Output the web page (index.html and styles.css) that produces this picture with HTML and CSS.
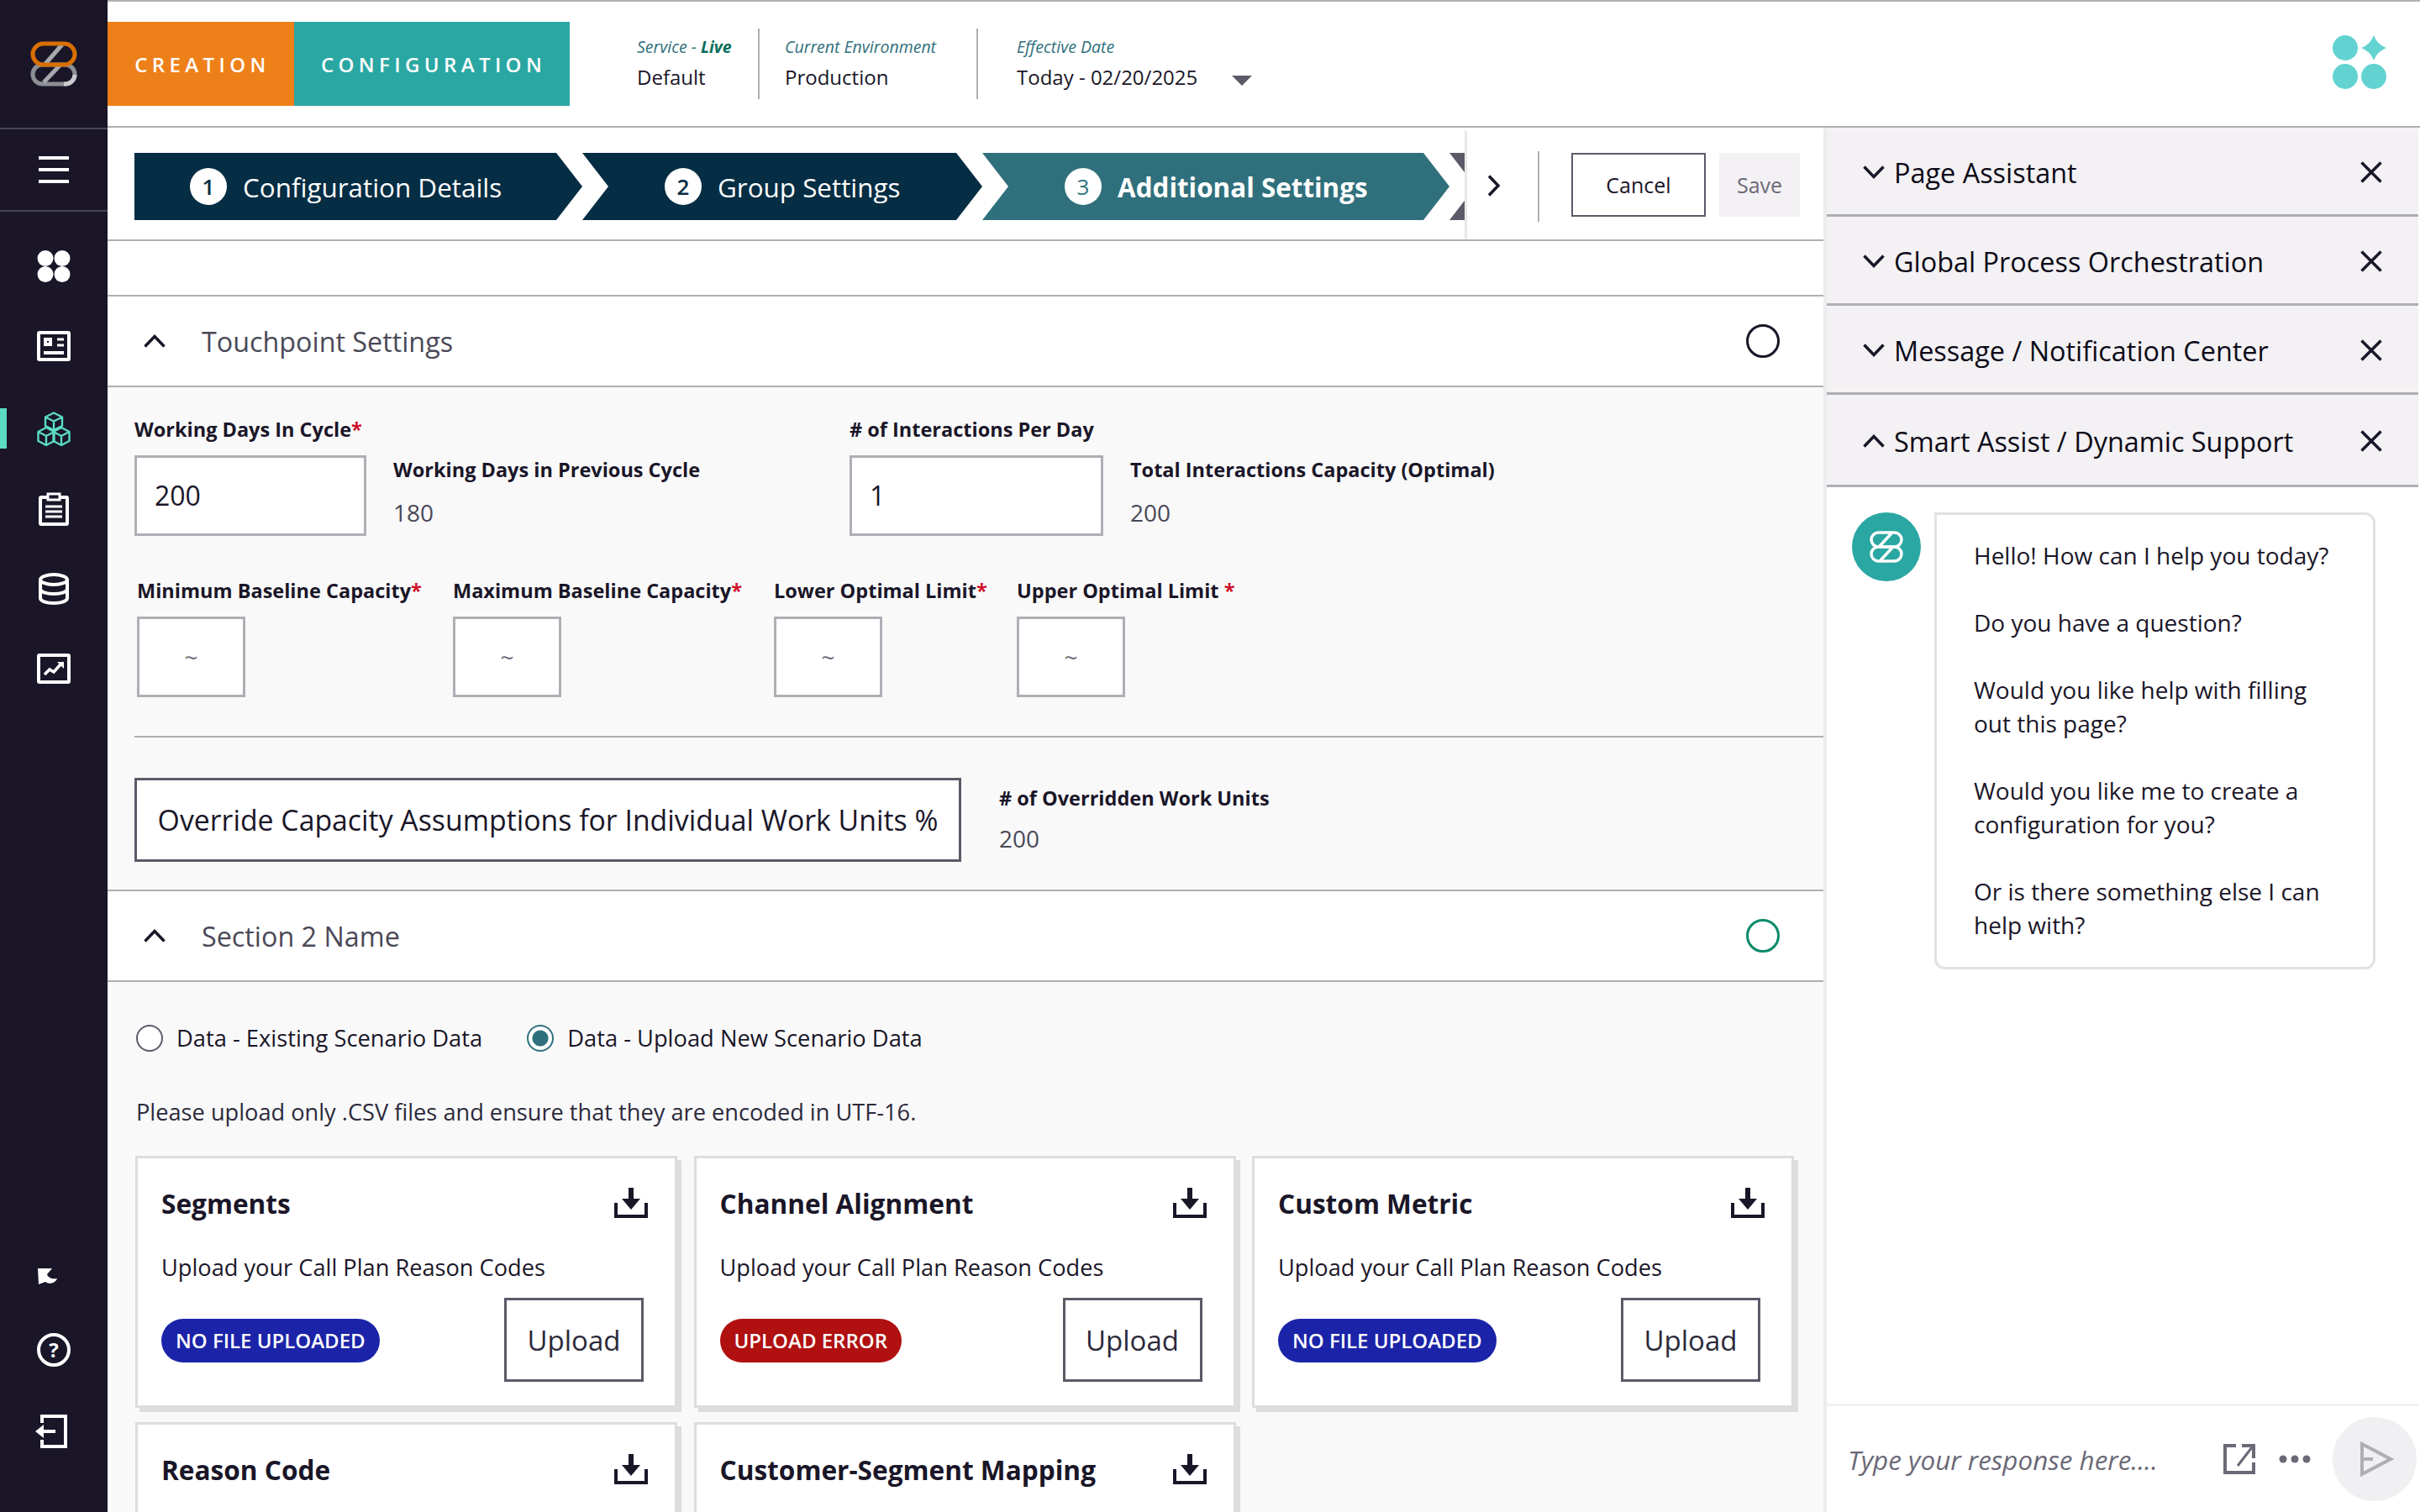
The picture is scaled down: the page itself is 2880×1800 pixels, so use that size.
FILE: index.html
```html
<!DOCTYPE html>
<html lang="en">
<head>
  <meta charset="UTF-8" />
  <title>Configuration - Additional Settings</title>
  <link rel="stylesheet" href="styles.css">
</head>
<body>
  <div class="app">

    <!-- left rail -->
    <aside class="rail">
      <div class="rail-logo">
        <svg width="56" height="54" viewBox="0 0 56 54" fill="none">
          <rect x="3" y="28" width="50" height="23" rx="11.5" stroke="#8b8e94" stroke-width="5"/>
          <path d="M16 49 L36 28" stroke="#a5a8ad" stroke-width="5"/>
          <path d="M40 51 H42 A11 11 0 0 0 53 40" stroke="#c9cbce" stroke-width="5"/>
          <path d="M18 27 L38 4" stroke="#a5a8ad" stroke-width="5"/>
          <rect x="3" y="3" width="50" height="25" rx="12.5" stroke="#d96f00" stroke-width="5"/>
        </svg>
      </div>
      <div class="rail-menu">
        <span></span><span></span><span></span>
      </div>
      <nav class="rail-nav">
        <a class="rail-item">
          <svg width="40" height="38" viewBox="0 0 40 38" fill="#fff"><circle cx="10" cy="9.5" r="9.5"/><circle cx="30" cy="9.5" r="9.5"/><circle cx="10" cy="28.5" r="9.5"/><circle cx="30" cy="28.5" r="9.5"/></svg>
        </a>
        <a class="rail-item">
          <svg width="40" height="36" viewBox="0 0 40 36" fill="none" stroke="#fff" stroke-width="4"><rect x="2" y="2" width="36" height="32" rx="1"/><rect x="10" y="10" width="6" height="6" stroke-width="4"/><path d="M24 10 H32 M24 17 H32" stroke-width="3"/><path d="M8 26 H32" stroke-width="4"/></svg>
        </a>
        <a class="rail-item active">
          <svg width="40" height="42" viewBox="0 0 40 42" fill="none" stroke="#5bdcc4" stroke-width="2.4" stroke-linejoin="round"><path d="M20 1.5 L30 6.5 V17 L20 22 L10 17 V6.5 Z M10 6.5 L20 11.5 L30 6.5 M20 11.5 V22"/><path d="M11 19 L20.5 24 V35 L11 40 L1.5 35 V24 Z M1.5 24 L11 29 L20.5 24 M11 29 V40"/><path d="M29 19 L38.5 24 V35 L29 40 L19.5 35 V24 Z M19.5 24 L29 29 L38.5 24 M29 29 V40"/></svg>
        </a>
        <a class="rail-item">
          <svg width="36" height="40" viewBox="0 0 36 40" fill="none" stroke="#fff" stroke-width="4"><rect x="2" y="6" width="32" height="32" rx="1"/><rect x="11" y="2" width="14" height="7" fill="#1a1628" stroke-width="3"/><path d="M8 17 H28 M8 23 H28 M8 29 H28" stroke-width="3"/></svg>
        </a>
        <a class="rail-item">
          <svg width="36" height="38" viewBox="0 0 36 38" fill="none" stroke="#fff" stroke-width="4"><ellipse cx="18" cy="8" rx="16" ry="6"/><path d="M2 8 V30 C2 33.5 9 36 18 36 C27 36 34 33.5 34 30 V8"/><path d="M2 19 C2 22.5 9 25 18 25 C27 25 34 22.5 34 19"/></svg>
        </a>
        <a class="rail-item">
          <svg width="40" height="36" viewBox="0 0 40 36" fill="none" stroke="#fff" stroke-width="4"><rect x="2" y="2" width="36" height="32" rx="1"/><path d="M9 25 L15 19 L20 22 L28 13" stroke-width="3.5"/><path d="M24 10 H32 V18 Z" fill="#fff" stroke="none"/></svg>
        </a>
      </nav>
      <div class="rail-bottom">
        <a class="rail-foot foot-back">
          <svg width="24" height="19" viewBox="0 0 24 19" fill="#fff"><path d="M0 0 H17 L11 7 C12 11 17 13 23 12 C21 17 15 20 9 16 L1 19 Z"/></svg>
        </a>
        <a class="rail-foot help">?</a>
        <a class="rail-foot foot-exit">
          <svg width="38" height="40" viewBox="0 0 38 40" fill="none" stroke="#fff" stroke-width="4"><path d="M8 10 V2 H36 V38 H8 V30"/><path d="M9 20 H24" stroke-width="4"/><path d="M0 20 L10 12 V28 Z" fill="#fff" stroke="none"/></svg>
        </a>
      </div>
    </aside>

    <div class="main">

      <!-- top bar -->
      <header class="topbar">
        <div class="tabs">
          <div class="tab tab-creation">CREATION</div>
          <div class="tab tab-config">CONFIGURATION</div>
        </div>
        <div class="meta meta-service">
          <div class="meta-label">Service - <b>Live</b></div>
          <div class="meta-value">Default</div>
        </div>
        <div class="meta meta-env">
          <div class="meta-label">Current Environment</div>
          <div class="meta-value">Production</div>
        </div>
        <div class="meta meta-date">
          <div class="meta-label">Effective Date</div>
          <div class="meta-value">Today - 02/20/2025</div>
        </div>
        <div class="date-caret"></div>
        <svg class="top-logo" width="64" height="64" viewBox="0 0 64 64" fill="#62d3d1"><circle cx="15" cy="15" r="15"/><circle cx="15" cy="49" r="15"/><circle cx="49" cy="49" r="15"/><path d="M49 0 Q53 11 64 15 Q53 19 49 30 Q45 19 34 15 Q45 11 49 0 Z"/></svg>
      </header>

      <div class="workspace">
        <main class="content">

          <!-- stepper -->
          <div class="stepbar">
            <div class="steps">
              <div class="step step-first"><span class="step-num">1</span>Configuration Details</div>
              <div class="step step-second"><span class="step-num">2</span>Group Settings</div>
              <div class="step step-current"><span class="step-num">3</span>Additional Settings</div>
              <div class="step step-next"></div>
            </div>
            <div class="step-more">
              <svg width="16" height="26" viewBox="0 0 16 26" fill="none" stroke="#1a1628" stroke-width="3.5"><path d="M2 1.5 L13 13 L2 24.5"/></svg>
            </div>
            <div class="step-rule"></div>
            <button class="btn-cancel">Cancel</button>
            <button class="btn-save">Save</button>
          </div>

          <div class="spacer"></div>

          <!-- touchpoint settings -->
          <section class="section-head">
            <svg class="caret" width="26" height="16" viewBox="0 0 26 16" fill="none" stroke="#1a1628" stroke-width="3.5"><path d="M1.5 14.5 L13 2.5 L24.5 14.5"/></svg>
            <h2>Touchpoint Settings</h2>
            <span class="status-dot"></span>
          </section>
          <div class="touch-body">
            <div class="row-top">
              <div class="group group-days">
                <div class="label">Working Days In Cycle<i>*</i></div>
                <div class="group-line">
                  <div class="input input-days">200</div>
                  <div class="stat">
                    <div class="label">Working Days in Previous Cycle</div>
                    <div class="stat-value">180</div>
                  </div>
                </div>
              </div>
              <div class="group">
                <div class="label"># of Interactions Per Day</div>
                <div class="group-line">
                  <div class="input input-inter">1</div>
                  <div class="stat">
                    <div class="label">Total Interactions Capacity (Optimal)</div>
                    <div class="stat-value">200</div>
                  </div>
                </div>
              </div>
            </div>
            <div class="row-limits">
              <div class="limit">
                <div class="label">Minimum Baseline Capacity<i>*</i></div>
                <div class="limit-box">~</div>
              </div>
              <div class="limit">
                <div class="label">Maximum Baseline Capacity<i>*</i></div>
                <div class="limit-box">~</div>
              </div>
              <div class="limit">
                <div class="label">Lower Optimal Limit<i>*</i></div>
                <div class="limit-box">~</div>
              </div>
              <div class="limit">
                <div class="label">Upper Optimal Limit <i>*</i></div>
                <div class="limit-box">~</div>
              </div>
            </div>
            <div class="rule"></div>
            <div class="row-override">
              <button class="btn-override">Override Capacity Assumptions for Individual Work Units %</button>
              <div class="stat">
                <div class="label"># of Overridden Work Units</div>
                <div class="stat-value">200</div>
              </div>
            </div>
          </div>

          <!-- section 2 -->
          <section class="section-head">
            <svg class="caret" width="26" height="16" viewBox="0 0 26 16" fill="none" stroke="#1a1628" stroke-width="3.5"><path d="M1.5 14.5 L13 2.5 L24.5 14.5"/></svg>
            <h2>Section 2 Name</h2>
            <span class="status-dot done"></span>
          </section>
          <div class="upload-body">
            <div class="radios">
              <label class="radio"><span class="radio-mark"></span>Data - Existing Scenario Data</label>
              <label class="radio on"><span class="radio-mark"></span>Data - Upload New Scenario Data</label>
            </div>
            <p class="note">Please upload only .CSV files and ensure that they are encoded in UTF-16.</p>
            <div class="cards">
              <div class="card">
                <div class="card-head"><h3>Segments</h3>
                  <svg width="40" height="36" viewBox="0 0 40 36"><path d="M17 0 H23 V13 H31 L20 26 L9 13 H17 Z" fill="#1a1628"/><path d="M2 18 V34 H38 V18" fill="none" stroke="#1a1628" stroke-width="4"/></svg>
                </div>
                <p class="card-desc">Upload your Call Plan Reason Codes</p>
                <div class="card-foot"><span class="pill pill-none">NO FILE UPLOADED</span><button class="btn-upload">Upload</button></div>
              </div>
              <div class="card">
                <div class="card-head"><h3>Channel Alignment</h3>
                  <svg width="40" height="36" viewBox="0 0 40 36"><path d="M17 0 H23 V13 H31 L20 26 L9 13 H17 Z" fill="#1a1628"/><path d="M2 18 V34 H38 V18" fill="none" stroke="#1a1628" stroke-width="4"/></svg>
                </div>
                <p class="card-desc">Upload your Call Plan Reason Codes</p>
                <div class="card-foot"><span class="pill pill-error">UPLOAD ERROR</span><button class="btn-upload">Upload</button></div>
              </div>
              <div class="card">
                <div class="card-head"><h3>Custom Metric</h3>
                  <svg width="40" height="36" viewBox="0 0 40 36"><path d="M17 0 H23 V13 H31 L20 26 L9 13 H17 Z" fill="#1a1628"/><path d="M2 18 V34 H38 V18" fill="none" stroke="#1a1628" stroke-width="4"/></svg>
                </div>
                <p class="card-desc">Upload your Call Plan Reason Codes</p>
                <div class="card-foot"><span class="pill pill-none">NO FILE UPLOADED</span><button class="btn-upload">Upload</button></div>
              </div>
              <div class="card">
                <div class="card-head"><h3>Reason Code</h3>
                  <svg width="40" height="36" viewBox="0 0 40 36"><path d="M17 0 H23 V13 H31 L20 26 L9 13 H17 Z" fill="#1a1628"/><path d="M2 18 V34 H38 V18" fill="none" stroke="#1a1628" stroke-width="4"/></svg>
                </div>
              </div>
              <div class="card">
                <div class="card-head"><h3>Customer-Segment Mapping</h3>
                  <svg width="40" height="36" viewBox="0 0 40 36"><path d="M17 0 H23 V13 H31 L20 26 L9 13 H17 Z" fill="#1a1628"/><path d="M2 18 V34 H38 V18" fill="none" stroke="#1a1628" stroke-width="4"/></svg>
                </div>
              </div>
            </div>
          </div>
        </main>

        <!-- right panel -->
        <aside class="panel">
          <div class="panel-row">
            <svg class="panel-caret" width="26" height="16" viewBox="0 0 26 16" fill="none" stroke="#1a1628" stroke-width="3.5"><path d="M1.5 1.5 L13 13.5 L24.5 1.5"/></svg>
            <span>Page Assistant</span>
            <svg class="panel-close" width="26" height="26" viewBox="0 0 26 26" fill="none" stroke="#1a1628" stroke-width="3.5"><path d="M1.5 1.5 L24.5 24.5 M24.5 1.5 L1.5 24.5"/></svg>
          </div>
          <div class="panel-row">
            <svg class="panel-caret" width="26" height="16" viewBox="0 0 26 16" fill="none" stroke="#1a1628" stroke-width="3.5"><path d="M1.5 1.5 L13 13.5 L24.5 1.5"/></svg>
            <span>Global Process Orchestration</span>
            <svg class="panel-close" width="26" height="26" viewBox="0 0 26 26" fill="none" stroke="#1a1628" stroke-width="3.5"><path d="M1.5 1.5 L24.5 24.5 M24.5 1.5 L1.5 24.5"/></svg>
          </div>
          <div class="panel-row">
            <svg class="panel-caret" width="26" height="16" viewBox="0 0 26 16" fill="none" stroke="#1a1628" stroke-width="3.5"><path d="M1.5 1.5 L13 13.5 L24.5 1.5"/></svg>
            <span>Message / Notification Center</span>
            <svg class="panel-close" width="26" height="26" viewBox="0 0 26 26" fill="none" stroke="#1a1628" stroke-width="3.5"><path d="M1.5 1.5 L24.5 24.5 M24.5 1.5 L1.5 24.5"/></svg>
          </div>
          <div class="panel-row panel-row-open">
            <svg class="panel-caret" width="26" height="16" viewBox="0 0 26 16" fill="none" stroke="#1a1628" stroke-width="3.5"><path d="M1.5 14.5 L13 2.5 L24.5 14.5"/></svg>
            <span>Smart Assist / Dynamic Support</span>
            <svg class="panel-close" width="26" height="26" viewBox="0 0 26 26" fill="none" stroke="#1a1628" stroke-width="3.5"><path d="M1.5 1.5 L24.5 24.5 M24.5 1.5 L1.5 24.5"/></svg>
          </div>
          <div class="chat">
            <div class="avatar">
              <svg width="40" height="38" viewBox="0 0 40 38" fill="none" stroke="#fff" stroke-width="3.5"><rect x="2" y="2" width="36" height="17" rx="8.5"/><rect x="2" y="19" width="36" height="17" rx="8.5"/><path d="M12 18 L26 3 M13 35 L27 20"/></svg>
            </div>
            <div class="bubble">
              <p>Hello! How can I help you today?</p>
              <p>Do you have a question?</p>
              <p>Would you like help with filling<br>out this page?</p>
              <p>Would you like me to create a<br>configuration for you?</p>
              <p>Or is there something else I can<br>help with?</p>
            </div>
          </div>
          <div class="composer">
            <span class="composer-hint">Type your response here....</span>
            <svg class="ext-icon" width="38" height="36" viewBox="0 0 38 36" fill="none" stroke="#6b6977" stroke-width="4"><path d="M15 2 H2 V34 H36 V22"/><path d="M17 26 L34 4" stroke-width="3"/><path d="M22 2 H36 V17" stroke-width="4"/></svg>
            <svg class="dots-icon" width="38" height="12" viewBox="0 0 38 12" fill="#6b6977"><circle cx="5" cy="6" r="4.5"/><circle cx="19" cy="6" r="4.5"/><circle cx="33" cy="6" r="4.5"/></svg>
            <div class="send">
              <svg width="40" height="44" viewBox="0 0 40 44" fill="none" stroke="#b0aeb5" stroke-width="4"><path d="M2 4 L36 22 L2 40 Z"/><path d="M2 22 H15" stroke-width="4"/></svg>
            </div>
          </div>
        </aside>
      </div>
    </div>
  </div>
</body>
</html>
```

FILE: styles.css
```css
* {
  box-sizing: border-box;
}

html, body {
  margin: 0;
  height: 100%;
  overflow: hidden;
}

body {
  font-family: 'Open Sans', sans-serif;
  color: #1a1628;
  background: #fff;
}

button {
  font-family: inherit;
  cursor: pointer;
}

svg {
  display: block;
}

.app {
  display: flex;
  width: 2880px;
  height: 1800px;
  overflow: hidden;
}

/* left rail */
.rail {
  width: 128px;
  flex-shrink: 0;
  background: #1a1628;
  display: flex;
  flex-direction: column;
}

.rail-logo {
  height: 154px;
  padding: 49px 0 0 36px;
  border-bottom: 2px solid #48455a;
}

.rail-menu {
  height: 98px;
  padding-top: 32px;
  border-bottom: 2px solid #48455a;
  display: flex;
  flex-direction: column;
  align-items: center;
  gap: 10px;
}

.rail-menu span {
  width: 36px;
  height: 4px;
  background: #fff;
}

.rail-nav {
  display: flex;
  flex-direction: column;
  align-items: center;
  padding-top: 46px;
  gap: 57px;
}

.rail-item {
  display: flex;
  justify-content: center;
  height: 39px;
}

.rail-item.active {
  position: relative;
}

.rail-item.active::before {
  content: "";
  position: absolute;
  left: -44px;
  top: -4px;
  width: 8px;
  height: 48px;
  background: #5bdcc4;
}

.rail-bottom {
  margin-top: auto;
  padding-bottom: 76px;
  display: flex;
  flex-direction: column;
  align-items: center;
}

.rail-foot {
  display: block;
}

.foot-back {
  margin: 0 14px 58px 0;
}

.foot-exit {
  margin: 57px 6px 0 0;
}

.help {
  width: 40px;
  height: 40px;
  border: 4px solid #fff;
  border-radius: 50%;
  color: #fff;
  font-size: 24px;
  font-weight: 700;
  text-align: center;
  line-height: 32px;
}

/* top bar */
.main {
  flex: 1;
  min-width: 0;
  display: flex;
  flex-direction: column;
}

.topbar {
  height: 152px;
  flex-shrink: 0;
  border-top: 2px solid #b0aeb5;
  border-bottom: 2px solid #b0aeb5;
  display: flex;
  align-items: flex-start;
}

.tabs {
  display: flex;
  margin-top: 24px;
  height: 100px;
}

.tab {
  display: flex;
  align-items: center;
  justify-content: center;
  padding-left: 4px;
  color: #fff;
  font-size: 24px;
  font-weight: 600;
  letter-spacing: 5.4px;
}

.tab-creation {
  width: 222px;
  background: #ee801a;
}

.tab-config {
  width: 328px;
  background: #2aa7a3;
}

.meta {
  margin-top: 32px;
  height: 84px;
}

.meta-service {
  width: 144px;
  margin-left: 80px;
}

.meta-env {
  width: 260px;
  padding-left: 30px;
  border-left: 2px solid #b0aeb5;
}

.meta-date {
  padding-left: 46px;
  border-left: 2px solid #b0aeb5;
}

.meta-label {
  font-size: 19.5px;
  font-style: italic;
  line-height: 28px;
  margin-top: 8px;
  color: #2f6f7c;
}

.meta-label b {
  color: #0a6e5c;
  font-weight: 700;
}

.meta-value {
  font-size: 24px;
  font-weight: 500;
  line-height: 36px;
  margin-top: 4px;
}

.date-caret {
  margin: 88px 0 0 41px;
  border-left: 12px solid transparent;
  border-right: 12px solid transparent;
  border-top: 12px solid #5c5a68;
}

.top-logo {
  margin: 40px 40px 0 auto;
}

/* main + side panel */
.workspace {
  flex: 1;
  min-height: 0;
  display: flex;
}

.content {
  width: 2042px;
  flex-shrink: 0;
  overflow: hidden;
}

/* stepper */
.stepbar {
  height: 135px;
  border-bottom: 2px solid #b0aeb5;
  padding-left: 32px;
  display: flex;
  align-items: flex-start;
}

.steps {
  width: 1583px;
  height: 80px;
  margin-top: 30px;
  flex-shrink: 0;
  display: flex;
  overflow: hidden;
}

.step {
  height: 80px;
  flex-shrink: 0;
  display: flex;
  align-items: center;
  gap: 19px;
  color: #fff;
  font-size: 31.4px;
  background: #052d44;
}

.step-first {
  width: 533px;
  padding-left: 66px;
  clip-path: polygon(0 0, 502px 0, 100% 50%, 502px 100%, 0 100%);
}

.step-second {
  width: 476px;
  padding-left: 98px;
  clip-path: polygon(0 0, 445px 0, 100% 50%, 445px 100%, 0 100%, 31px 50%);
}

.step-current {
  width: 556px;
  padding-left: 98px;
  font-weight: 700;
  background: #30707c;
  clip-path: polygon(0 0, 525px 0, 100% 50%, 525px 100%, 0 100%, 31px 50%);
}

.step-next {
  width: 60px;
  background: #5c5a68;
  clip-path: polygon(0 0, 100% 0, 100% 100%, 0 100%, 31px 50%);
}

.step-num {
  width: 44px;
  height: 44px;
  border-radius: 50%;
  background: #fff;
  color: #052d44;
  font-size: 26px;
  font-weight: 600;
  display: flex;
  align-items: center;
  justify-content: center;
}

.step-current .step-num {
  color: #30707c;
  font-weight: 400;
}

.step-more {
  width: 87px;
  height: 129px;
  margin-top: 4px;
  padding-left: 24px;
  border-left: 3px solid #e8e8e8;
  display: flex;
  align-items: center;
  flex-shrink: 0;
}

.step-rule {
  width: 2px;
  height: 84px;
  margin-top: 28px;
  background: #b0aeb5;
  flex-shrink: 0;
}

.btn-cancel {
  width: 160px;
  height: 76px;
  margin: 30px 0 0 38px;
  background: #fff;
  border: 2px solid #5c5a68;
  color: #1a1628;
  font-size: 25px;
  font-weight: 500;
  flex-shrink: 0;
}

.btn-save {
  width: 96px;
  height: 76px;
  margin: 30px 0 0 16px;
  background: #f3f1f3;
  border: 0;
  color: #6b6977;
  font-size: 25px;
  font-weight: 500;
  flex-shrink: 0;
}

.spacer {
  height: 64px;
}

/* accordion headers */
.section-head {
  height: 110px;
  border-top: 2px solid #b0aeb5;
  border-bottom: 2px solid #b0aeb5;
  padding: 0 52px 0 43px;
  display: flex;
  align-items: center;
}

.section-head h2 {
  margin: 0 0 0 43px;
  font-size: 32.3px;
  font-weight: 500;
  color: #4a4857;
}

.status-dot {
  width: 40px;
  height: 40px;
  margin-left: auto;
  border: 3px solid #1a1628;
  border-radius: 50%;
}

.status-dot.done {
  border-color: #0b8a6a;
}

/* touchpoint form */
.touch-body {
  height: 598px;
  background: #f9f9fa;
  padding-top: 34px;
}

.label {
  font-size: 23.5px;
  font-weight: 700;
  line-height: 32px;
  white-space: nowrap;
}

.label i {
  color: #d0112b;
  font-style: normal;
}

.row-top {
  display: flex;
  padding-left: 32px;
}

.group-days {
  width: 851px;
}

.group-line {
  display: flex;
  margin-top: 15px;
}

.input {
  height: 96px;
  background: #fff;
  border: 3px solid #b0aeb5;
  padding-left: 21px;
  font-size: 32px;
  line-height: 90px;
}

.input-days {
  width: 276px;
}

.input-inter {
  width: 302px;
}

.stat {
  margin-left: 32px;
  padding-top: 1px;
}

.stat-value {
  font-size: 28px;
  line-height: 36px;
  margin-top: 17px;
  color: #4a4857;
}

.row-limits {
  display: grid;
  grid-template-columns: 376px 382px 289px auto;
  justify-content: start;
  padding-left: 35px;
  margin-top: 49px;
}

.limit-box {
  width: 129px;
  height: 96px;
  margin-top: 15px;
  background: #fff;
  border: 3px solid #b0aeb5;
  color: #6b6977;
  font-size: 28px;
  display: flex;
  align-items: center;
  justify-content: center;
}

.rule {
  margin: 46px 0 0 32px;
  height: 2px;
  background: #b0aeb5;
}

.row-override {
  display: flex;
  padding-left: 32px;
  margin-top: 48px;
}

.btn-override {
  width: 984px;
  height: 100px;
  background: #fff;
  border: 3px solid #5c5a68;
  color: #1a1628;
  font-size: 33.8px;
  font-weight: 500;
  white-space: nowrap;
  padding: 0;
}

.row-override .stat {
  margin-left: 45px;
  padding-top: 8px;
}

.row-override .stat-value {
  margin-top: 14px;
}

/* section 2 */
.upload-body {
  height: 631px;
  background: #f9f9fa;
  padding-top: 49px;
}

.radios {
  display: flex;
  padding-left: 34px;
  gap: 53px;
}

.radio {
  display: flex;
  align-items: center;
  gap: 16px;
  font-size: 27.3px;
  line-height: 36px;
}

.radio-mark {
  width: 32px;
  height: 32px;
  border: 2px solid #5c5a68;
  border-radius: 50%;
  background: #fff;
}

.radio.on .radio-mark {
  border-color: #30707c;
  background: radial-gradient(circle, #30707c 0 9px, #fff 10px);
}

.note {
  margin: 52px 0 0 34px;
  font-size: 27.2px;
  line-height: 36px;
  color: #2c2a3a;
}

.cards {
  display: grid;
  grid-template-columns: repeat(3, 645px);
  column-gap: 19.5px;
  row-gap: 17px;
  padding-left: 33px;
  margin-top: 34px;
}

.card {
  height: 300px;
  background: #fff;
  border: 3px solid #dddde0;
  box-shadow: 5px 5px 0 #dddde0;
  padding: 33px 32px 0 28px;
}

.card-head {
  display: flex;
  justify-content: space-between;
  align-items: center;
  height: 40px;
}

.card-head h3 {
  margin: 0;
  font-size: 31.6px;
  font-weight: 700;
}

.card-desc {
  margin: 39px 0 0;
  font-size: 27.2px;
  line-height: 36px;
}

.card-foot {
  display: flex;
  justify-content: space-between;
  align-items: center;
  margin-top: 18px;
  padding-right: 5px;
}

.pill {
  height: 52px;
  margin-top: 2px;
  padding: 0 17px;
  border-radius: 26px;
  color: #fff;
  font-size: 24px;
  font-weight: 600;
  line-height: 52px;
  white-space: nowrap;
}

.pill-none {
  background: #1b24a8;
}

.pill-error {
  background: #b01010;
}

.btn-upload {
  width: 166px;
  height: 100px;
  background: #fff;
  border: 3px solid #5c5a68;
  color: #2c2a3a;
  font-size: 33px;
  padding: 0;
}

/* right panel */
.panel {
  flex: 1;
  min-width: 0;
  display: flex;
  flex-direction: column;
  border-left: 4px solid #ededee;
  padding-right: 2px;
}

.panel-row {
  height: 106px;
  flex-shrink: 0;
  background: #f3f1f3;
  border-bottom: 3px solid #b0aeb5;
  padding: 2px 43px 0 43px;
  display: flex;
  align-items: center;
  font-size: 32.4px;
  font-weight: 500;
  color: #0d0a18;
}

.panel-row-open {
  height: 110px;
}

.panel-row span {
  margin-left: 11px;
}

.panel-close {
  margin-left: auto;
}

.chat {
  flex: 1;
  min-height: 0;
  display: flex;
  align-items: flex-start;
  padding: 30px 0 0 30px;
}

.avatar {
  width: 82px;
  height: 82px;
  border-radius: 50%;
  background: #2aa7a3;
  display: flex;
  align-items: center;
  justify-content: center;
  flex-shrink: 0;
}

.bubble {
  width: 525px;
  margin-left: 16px;
  padding: 28px 40px 30px 44px;
  border: 3px solid #e2e2e4;
  border-radius: 0 12px 12px 12px;
  font-size: 28px;
  line-height: 40px;
}

.bubble p {
  margin: 0 0 40px;
}

.bubble p:last-child {
  margin-bottom: 0;
}

.composer {
  height: 129px;
  flex-shrink: 0;
  border-top: 3px solid #f3f1f3;
  padding-left: 25px;
  display: flex;
  align-items: center;
}

.composer-hint {
  font-size: 31.4px;
  font-style: italic;
  color: #6b6977;
  white-space: nowrap;
}

.ext-icon {
  margin-left: auto;
  margin-right: 28px;
}

.dots-icon {
  margin-right: 26px;
}

.send {
  width: 100px;
  height: 100px;
  margin-right: 2px;
  border-radius: 50%;
  background: #f0eff1;
  display: flex;
  align-items: center;
  justify-content: center;
  padding-left: 6px;
}
```
